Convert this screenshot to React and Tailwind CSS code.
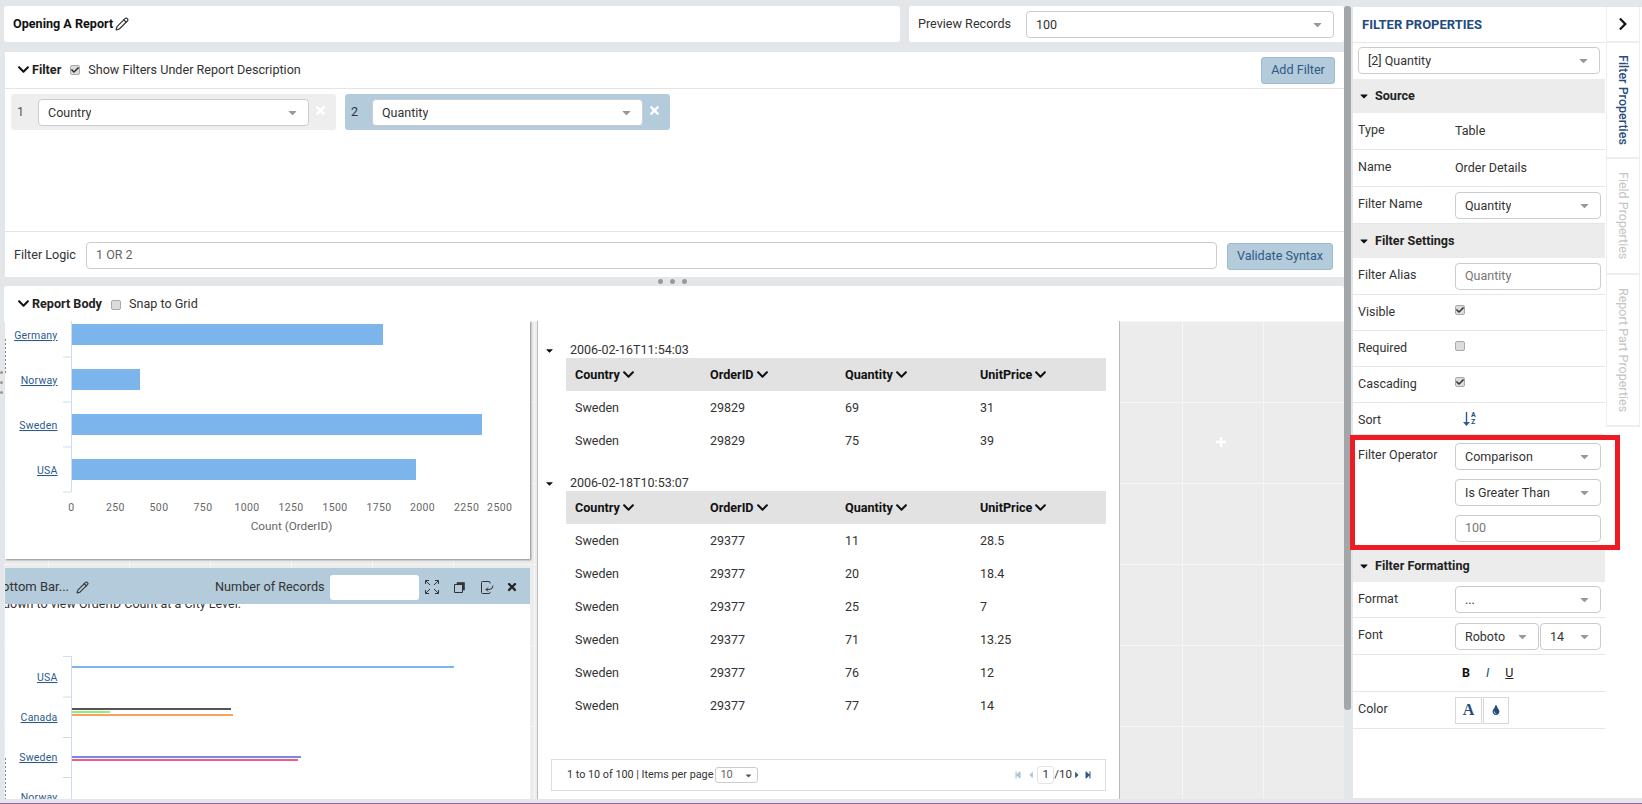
import { FaChevronDown, FaChevronRight, FaTimes, FaCaretDown, FaCheck, FaTint, FaStepBackward, FaStepForward, FaCaretLeft, FaCaretRight } from 'react-icons/fa';
import { LuPencil } from 'react-icons/lu';

const inputCls = 'h-[27px] bg-white border border-[#c9cdd1] rounded-[4px] text-[12.5px] flex items-center pl-[9px]';

function Select({ value, className = '' }) {
  return (
    <div className={`${inputCls} pr-[9px] justify-between text-[#333] ${className}`}>
      <span className="truncate pt-[2px]">{value}</span>
      <FaCaretDown className="text-[#999] text-[13px] shrink-0" />
    </div>
  );
}

function Check({ checked, className = '' }) {
  return (
    <span className={`w-[10px] h-[10px] border border-[#aaaaaa] rounded-[2px] bg-[#dcdcdc] flex items-center justify-center shrink-0 ${className}`}>
      {checked && <FaCheck className="text-[8px] text-[#333]" />}
    </span>
  );
}

function FilterCard({ num, label, active }) {
  return (
    <div className={`w-[325px] h-[36px] rounded-[3px] flex items-center ${active ? 'bg-[#b3cbdb]' : 'bg-[#eeeeee]'}`}>
      <span className={`w-[27px] pl-[6px] text-[12.5px] ${active ? 'text-[#333]' : 'text-[#555]'}`}>{num}</span>
      <Select value={label} className="w-[271px]" />
      <FaTimes className="ml-[5px] text-white text-[13px] -mt-[3px]" />
    </div>
  );
}

function Row({ label, children, className = 'h-[36px]', labelClass = 'pt-[10px]' }) {
  return (
    <div className={`flex border-b border-[#e6e6e6] ${className}`}>
      <div className={`w-[102px] pl-[5px] text-[12.5px] text-[#333] leading-[14px] ${labelClass}`}>{label}</div>
      <div className="w-[146px] flex flex-col justify-center gap-[9px] text-[12.5px] text-[#333]">{children}</div>
    </div>
  );
}

function Section({ title, className = '' }) {
  return (
    <div className={`bg-[#ececec] flex items-center pl-[5px] gap-[5px] font-bold text-[12.6px] text-[#222] ${className}`}>
      <FaCaretDown className="text-[12px] text-[#111]" />
      {title}
    </div>
  );
}

function SideTab({ label, className, active }) {
  return (
    <div className={`w-[34px] bg-white border-x border-b-2 border-[#eeeeee] flex justify-center ${active ? 'pt-[12px]' : 'pt-[13px]'} ${className}`}>
      <span className={`[writing-mode:vertical-rl] text-[12.5px] ${active ? 'text-[#2a4d7c] font-medium' : 'text-[#c4c4c4]'}`}>{label}</span>
    </div>
  );
}

function ChartOne() {
  const ticks = [[71.5, '0'], [115.4, '250'], [159, '500'], [203, '750'], [247, '1000'], [291, '1250'], [335, '1500'], [379, '1750'], [422.5, '2000'], [466.6, '2250'], [499.7, '2500']];
  const bars = [['Germany', 3, 383], ['Norway', 48, 140], ['Sweden', 93, 482], ['USA', 138, 416]];
  return (
    <svg width="525" height="238" viewBox="5 321 525 238" className="block">
      <path d="M71.5 321V492M63 357H71M63 402H71M63 447H71M63 492H71" stroke="#cfdcec" fill="none" />
      <path d="M5.5 339V375" stroke="#888" strokeDasharray="2 2" fill="none" />
      {bars.map(([name, y, end]) => (
        <g key={name}>
          <rect x="72" y={321 + y} width={end - 72} height="21" fill="#7cb4ec" />
          <text x="57.5" y={321 + y + 15} textAnchor="end" fontSize="10.5" fill="#2c5a8c" textDecoration="underline" letterSpacing="0.2">{name}</text>
        </g>
      ))}
      {ticks.map(([x, t]) => (
        <text key={t} x={x} y="511" textAnchor="middle" fontSize="10.5" fill="#666" letterSpacing="0.4">{t}</text>
      ))}
      <text x="291.5" y="530" textAnchor="middle" fontSize="11.7" fill="#666">Count (OrderID)</text>
    </svg>
  );
}

function ChartTwo() {
  const labels = [['USA', 681], ['Canada', 721], ['Sweden', 761], ['Norway', 801]];
  const lines = [[666, 454, '#7cb4ec', 2], [708, 231, '#555555', 2], [711, 110, '#90ed7d', 2], [714, 233, '#f7a35c', 2], [756, 301, '#8085e9', 2], [759, 298, '#f15c80', 2]];
  return (
    <svg width="525" height="187" viewBox="5 612 525 187" className="block">
      <path d="M71.5 656V799M63 656.5H71M63 697H71M63 737.5H71M63 777.5H71" stroke="#cfdcec" fill="none" />
      <path d="M5.5 758V799" stroke="#888" strokeDasharray="2 2" fill="none" />
      {lines.map(([y, end, color, h]) => (
        <rect key={y} x="72" y={y} width={end - 72} height={h} fill={color} />
      ))}
      {labels.map(([name, y]) => (
        <text key={name} x="57.5" y={y} textAnchor="end" fontSize="10.5" fill="#2c5a8c" textDecoration="underline" letterSpacing="0.2">{name}</text>
      ))}
    </svg>
  );
}

function DataTable({ date, rows }) {
  const cols = ['Country', 'OrderID', 'Quantity', 'UnitPrice'];
  return (
    <div>
      <div className="h-[16px] flex items-center text-[12.5px] text-[#333]">
        <FaCaretDown className="w-[23px] text-[11px] text-[#111]" />
        <span className="ml-[9px]">{date}</span>
      </div>
      <div className="ml-[28px] w-[540px]">
        <div className="h-[33px] bg-[#e2e2e2] flex items-center pl-[9px] pt-[1px]">
          {cols.map((c) => (
            <div key={c} className="w-[135px] shrink-0 flex items-center gap-[2px] text-[12.6px] font-bold text-[#111]">
              {c} <FaChevronDown className="text-[13px] text-[#111]" />
            </div>
          ))}
        </div>
        {rows.map((r, i) => (
          <div key={i} className="h-[33px] flex items-center pl-[9px] pt-[2px] text-[12.5px] text-[#333]">
            <div className="w-[135px] shrink-0">Sweden</div>
            <div className="w-[135px] shrink-0">{r[0]}</div>
            <div className="w-[135px] shrink-0">{r[1]}</div>
            <div className="w-[135px] shrink-0">{r[2]}</div>
          </div>
        ))}
      </div>
    </div>
  );
}

export default function App() {
  return (
    <div className="w-[1642px] h-[804px] overflow-hidden bg-[#e4e7ea] font-['Roboto',sans-serif] text-[#333] flex flex-col">
      <div className="flex h-[803px] pt-[6px]">
        {/* main column */}
        <div className="w-[1340px] ml-[4px] flex flex-col">
          <div className="flex gap-[9px] h-[36px]">
            <div className="w-[896px] bg-white rounded-[3px] flex items-center pl-[9px] gap-[2px] font-bold text-[12.6px] text-[#111]">
              Opening A Report <LuPencil className="text-[14px] text-[#333]" />
            </div>
            <div className="flex-1 bg-white rounded-[3px] flex items-center pl-[9px] pr-[10px]">
              <span className="text-[12.6px] w-[108px]">Preview Records</span>
              <Select value="100" className="flex-1" />
            </div>
          </div>

          <div className="mt-[10px] ml-[1px] h-[225px] bg-white flex flex-col">
            <div className="h-[37px] border-b border-[#e4e4e4] flex items-center pl-[12px] pr-[9px]">
              <FaChevronDown className="text-[13px] text-[#111] mt-[-2px]" />
              <span className="ml-[2px] font-bold text-[12.6px] text-[#222]">Filter</span>
              <span className="ml-[9px]"><Check checked /></span>
              <span className="ml-[8px] text-[12.6px]">Show Filters Under Report Description</span>
              <button className="ml-auto w-[74px] h-[27px] bg-[#b3cbdb] border border-[#9fbccf] rounded-[3px] text-[12.6px] text-[#2f5a86]">Add Filter</button>
            </div>
            <div className="h-[143px] border-b border-[#e4e4e4] pt-[5px] pl-[6px] flex gap-[9px] items-start">
              <FilterCard num="1" label="Country" />
              <FilterCard num="2" label="Quantity" active />
            </div>
            <div className="flex-1 flex items-center pl-[9px] pr-[9px] pt-[1px]">
              <span className="text-[12.6px] w-[72px]">Filter Logic</span>
              <div className={`${inputCls} w-[1131px] text-[#666]`}>1 OR 2</div>
              <button className="ml-[10px] mt-[3px] w-[106px] h-[27px] bg-[#b3cbdb] border border-[#9fbccf] rounded-[3px] text-[12.6px] text-[#2f5a86]">Validate Syntax</button>
            </div>
          </div>

          <div className="h-[9px] flex items-center justify-center gap-[7px] pr-[4px]">
            <span className="w-[5px] h-[5px] rounded-full bg-[#999]" />
            <span className="w-[5px] h-[5px] rounded-full bg-[#999]" />
            <span className="w-[5px] h-[5px] rounded-full bg-[#999]" />
          </div>

          <div className="relative flex flex-col">
            {/* resize handle of the first chart, sits in the page margin */}
            <div className="absolute -left-[4px] top-[85px] flex flex-col gap-[7px]">
              <span className="w-[3px] h-[3px] rounded-full bg-[#999]" />
              <span className="w-[3px] h-[3px] rounded-full bg-[#999]" />
              <span className="w-[3px] h-[3px] rounded-full bg-[#999]" />
            </div>
            <div className="h-[35px] bg-white rounded-t-[3px] flex items-center pl-[13px] pt-[2px]">
              <FaChevronDown className="text-[13px] text-[#111] mt-[-2px]" />
              <span className="ml-[2px] font-bold text-[12.6px] text-[#222]">Report Body</span>
              <span className="ml-[9px]"><Check /></span>
              <span className="ml-[8px] text-[12.6px]">Snap to Grid</span>
            </div>

            {/* report canvas */}
            <div className="h-[478px] flex overflow-hidden bg-[#ececec] bg-[linear-gradient(to_right,#f6f6f6_1px,transparent_1px),linear-gradient(to_bottom,#f6f6f6_1px,transparent_1px)] bg-[size:81px_81px] bg-[position:44px_0px]">
              <div className="w-[525px] ml-[1px] shrink-0 flex flex-col">
                <div className="h-[238px] bg-white shadow-[1px_1px_2px_#888]"><ChartOne /></div>
                <div className="mt-[9px] flex-1 bg-white overflow-hidden flex flex-col">
                  <div className="h-[36px] bg-[#b3cbdb] flex items-center pt-[2px] text-[13px] text-[#333] relative z-10 shrink-0">
                    <span className="-ml-[11px]">Bottom Bar...</span>
                    <LuPencil className="ml-[7px] text-[13px] text-[#333]" />
                    <span className="ml-[126px] text-[12.7px]">Number of Records</span>
                    <div className="ml-[5px] w-[89px] h-[25px] bg-white rounded-[3px]" />
                    <svg width="14" height="14" viewBox="0 0 14 14" fill="none" stroke="#333" className="ml-[6px]">
                      <path d="M.5 4V.5H4M10 .5h3.5V4M13.5 10v3.5H10M4 13.5H.5V10M1 1l4 4M13 1L9 5M13 13L9 9M1 13l4-4" />
                    </svg>
                    <svg width="11" height="11" viewBox="0 0 11 11" className="ml-[15px]">
                      <path d="M.5 2.5h8v8h-8z" fill="none" stroke="#333" />
                      <path d="M3 .5h7.5v7.5H8.5V2.5H3z" fill="#333" stroke="#333" strokeWidth=".6" />
                    </svg>
                    <svg width="13" height="13" viewBox="0 0 13 13" fill="none" stroke="#333" className="ml-[16px]">
                      <path d="M9 2.5V1.5Q9 .5 8 .5H1.5Q.5.5.5 1.5v10q0 1 1 1H8q1 0 1-1V11" />
                      <path d="M12 4.5Q12 8.5 8 8.5H5M7 6.5l-2 2 2 2" />
                    </svg>
                    <FaTimes className="ml-[12px] text-[12px] text-[#222]" />
                  </div>
                  <div className="h-[8px] shrink-0 relative overflow-hidden text-[12.5px] text-[#333]">
                    <span className="absolute -top-[9px] left-0 whitespace-nowrap -ml-[2px]">down to view OrderID Count at a City Level.</span>
                  </div>
                  <ChartTwo />
                </div>
              </div>

              {/* table panel */}
              <div className="ml-[7px] w-[583px] shrink-0 bg-white border-x border-[#bbb] pt-[21px] flex flex-col">
                <DataTable date="2006-02-16T11:54:03" rows={[['29829', '69', '31'], ['29829', '75', '39']]} />
                <div className="mt-[18px]">
                  <DataTable date="2006-02-18T10:53:07" rows={[['29377', '11', '28.5'], ['29377', '20', '18.4'], ['29377', '25', '7'], ['29377', '71', '13.25'], ['29377', '76', '12'], ['29377', '77', '14']]} />
                </div>
                <div className="mt-[37px] ml-[13px] w-[555px] h-[32px] border border-[#ddd] flex items-center pl-[15px] pr-[13px] text-[10.8px] text-[#333]">
                  1 to 10 of 100 | Items per page
                  <div className="ml-[2px] w-[43px] h-[16px] border border-[#ccc] rounded-[3px] flex items-center justify-between px-[4px] text-[11px] text-[#666]">
                    10 <FaCaretDown className="text-[9px] text-[#555]" />
                  </div>
                  <div className="ml-auto flex items-center">
                    <FaStepBackward className="text-[8px] text-[#a9c4d8]" />
                    <FaCaretLeft className="ml-[4px] text-[10px] text-[#a9c4d8]" />
                    <span className="ml-[1px] w-[17px] h-[18px] border border-[#e4e4e4] rounded-[3px] flex items-center justify-center text-[11.5px]">1</span>
                    <span className="text-[11.5px]">/10</span>
                    <FaCaretRight className="text-[10px] text-[#2f5a86]" />
                    <FaStepForward className="ml-[2px] text-[8px] text-[#2f5a86]" />
                  </div>
                </div>
              </div>

              {/* free canvas with add cell */}
              <div className="flex-1 flex items-start pl-[96px] pt-[116px]">
                <svg width="10" height="10" viewBox="0 0 10 10"><path d="M5 0v10M0 5h10" stroke="#fff" strokeWidth="2.5" /></svg>
              </div>
            </div>
          </div>
        </div>

        {/* scrollbar */}
        <div className="w-[7px] h-[704px] bg-[#a3a7aa] rounded-[3px]" />

        {/* properties panel */}
        <div className="ml-[2px] w-[252px] mt-[1px] h-[791px] bg-white">
          <div className="h-[36px] border-b border-[#e6e6e6] flex items-center pl-[9px] pt-[1px] font-bold text-[13px] text-[#234b80] uppercase">Filter Properties</div>
          <div className="h-[36px] pt-[4px] px-[5px]"><Select value="[2] Quantity" /></div>
          <Section title="Source" className="h-[34px]" />
          <Row label="Type" className="h-[37px]"><span className="pt-[1px]">Table</span></Row>
          <Row label="Name" className="h-[37px]"><span className="pt-[1px]">Order Details</span></Row>
          <Row label="Filter Name" className="h-[37px]"><Select value="Quantity" /></Row>
          <Section title="Filter Settings" className="h-[34px]" />
          <Row label="Filter Alias" className="h-[37px]"><div className={`${inputCls} text-[#777]`}>Quantity</div></Row>
          <Row label="Visible"><Check checked className="-mt-[6px]" /></Row>
          <Row label="Required"><Check className="-mt-[6px]" /></Row>
          <Row label="Cascading"><Check checked className="-mt-[6px]" /></Row>
          <Row label="Sort" className="h-[32px]">
            <span className="flex items-center gap-[1px] pl-[8px] text-[#234b80]">
              <svg width="7" height="14" viewBox="0 0 7 14" fill="#2a5a9a"><path d="M2.8 0h1.4v10H7l-3.5 4L0 10h2.8z" /></svg>
              <span className="flex flex-col text-[7px] leading-[7px] font-bold"><span>A</span><span>Z</span></span>
            </span>
          </Row>
          <div className="relative">
            <Row label="Filter Operator" className="h-[115px] pt-[8px] pb-[7px]" labelClass="pt-[5px]">
              <Select value="Comparison" />
              <Select value="Is Greater Than" />
              <div className={`${inputCls} text-[#777]`}>100</div>
            </Row>
            <div className="absolute top-0 -left-[3px] w-[270px] h-[115px] border-[5px] border-[#ed1c24]" />
          </div>
          <Section title="Filter Formatting" className="h-[32px]" />
          <Row label="Format"><Select value="..." /></Row>
          <Row label="Font" className="h-[37px]">
            <div className="flex gap-[1px]">
              <Select value="Roboto" className="w-[84px]" />
              <Select value="14" className="w-[61px]" />
            </div>
          </Row>
          <Row label="" className="h-[37px]">
            <div className="flex items-center pl-[7px] gap-[16px]">
              <span className="font-bold text-[#111]">B</span>
              <span className="italic text-[#234b80]">I</span>
              <span className="underline text-[#222]">U</span>
            </div>
          </Row>
          <Row label="Color" className="h-[37px]">
            <div className="flex gap-[1px]">
              <span className="w-[27px] h-[27px] border border-[#d8d8d8] flex items-center justify-center font-['Liberation_Serif',serif] font-bold text-[16px] text-[#234b80]">A</span>
              <span className="w-[26px] h-[27px] border border-[#d8d8d8] flex items-center justify-center"><FaTint className="text-[10px] text-[#234b80]" /></span>
            </div>
          </Row>
        </div>

        {/* vertical tabs */}
        <div className="flex-1 mt-[1px] h-[791px] bg-white flex flex-col pl-[1px]">
          <div className="w-[34px] h-[36px] bg-white border-x border-b-2 border-[#eeeeee] flex items-center justify-center">
            <FaChevronRight className="text-[14px] text-[#111]" />
          </div>
          <SideTab label="Filter Properties" active className="h-[116px]" />
          <SideTab label="Field Properties" className="h-[116px]" />
          <SideTab label="Report Part Properties" className="h-[152px]" />
        </div>
      </div>
      <div className="h-px bg-[#9b59a6]" />
    </div>
  );
}
